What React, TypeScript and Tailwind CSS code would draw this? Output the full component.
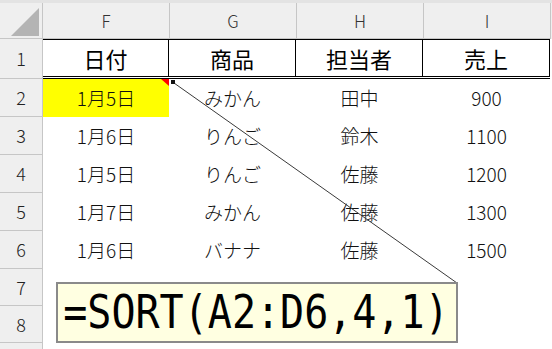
import React from 'react';

const cols = [
  { key: 'F', width: 'w-[127px]' },
  { key: 'G', width: 'w-[127px]' },
  { key: 'H', width: 'w-[127px]' },
  { key: 'I', width: 'w-[127px]' },
];

const headers = ['日付', '商品', '担当者', '売上'];

const rows = [
  ['1月5日', 'みかん', '田中', '900'],
  ['1月6日', 'りんご', '鈴木', '1100'],
  ['1月5日', 'りんご', '佐藤', '1200'],
  ['1月7日', 'みかん', '佐藤', '1300'],
  ['1月6日', 'バナナ', '佐藤', '1500'],
];

const font = { fontFamily: '"Noto Sans CJK JP", "Noto Sans", sans-serif' };

const RowHead = ({ n, h }: { n: string; h: string }) => (
  <div
    className={`w-[43px] ${h} shrink-0 bg-[#efefef] border-r border-b border-[#c6c6c6] flex items-center justify-center text-[18px] font-light text-[#222]`}
  >
    {n}
  </div>
);

const App = () => {
  return (
    <div className="relative w-[552px] h-[349px] overflow-hidden bg-white" style={font}>
      {/* Column headers */}
      <div className="flex h-[39px] border-t-[3px] border-[#e3e3e3] bg-[#efefef]">
        <div className="w-[43px] shrink-0 border-r border-b border-[#c6c6c6] relative">
          <div className="absolute left-[11px] top-[5px] w-[28px] h-[28px] bg-[#b4b4b4] [clip-path:polygon(100%_0,100%_100%,0_100%)]" />
        </div>
        {cols.map((c) => (
          <div
            key={c.key}
            className={`${c.width} shrink-0 border-r border-b border-[#c6c6c6] flex items-center justify-center text-[17px] font-light text-[#333]`}
          >
            {c.key}
          </div>
        ))}
      </div>

      {/* Row 1 - table header */}
      <div className="flex h-[40px]">
        <RowHead n="1" h="h-[40px]" />
        <div className="flex border-t border-black border-b-[3px] border-b-black [border-bottom-style:double]">
          {headers.map((t, i) => (
            <div
              key={t}
              className={`${i === 0 ? 'w-[126px]' : 'w-[127px]'} shrink-0 border-r border-black flex items-center justify-center text-[22px] text-black`}
            >
              {t}
            </div>
          ))}
        </div>
      </div>

      {/* Data rows */}
      {rows.map((r, ri) => (
        <div key={ri} className="flex h-[38px]">
          <RowHead n={String(ri + 2)} h="h-[38px]" />
          {r.map((v, ci) => (
            <div
              key={ci}
              className={`${ci === 0 ? 'w-[126px]' : 'w-[127px]'} shrink-0 flex items-center justify-center text-[19px] font-light text-[#111] ${
                ri === 0 && ci === 0 ? 'bg-[#ffff00] relative' : ''
              }`}
            >
              {v}
              {ri === 0 && ci === 0 && (
                <div className="absolute right-0 top-0 w-[8px] h-[7px] bg-[#ff0000] [clip-path:polygon(0_0,100%_0,100%_100%)]" />
              )}
            </div>
          ))}
        </div>
      ))}

      <div className="flex h-[37px]">
        <RowHead n="7" h="h-[37px]" />
      </div>
      <div className="flex h-[37px]">
        <RowHead n="8" h="h-[37px]" />
      </div>
      <div className="flex h-[10px]">
        <RowHead n="" h="h-[10px]" />
      </div>

      {/* Comment leader line */}
      <svg className="absolute left-0 top-0 pointer-events-none" width="552" height="349">
        <line x1="174" y1="83" x2="457" y2="283" stroke="#3a3a3a" strokeWidth="1" />
        <rect x="171" y="80" width="4" height="4" fill="#111" />
      </svg>

      {/* Comment box */}
      <div className="absolute left-[56px] top-[282px] w-[402px] h-[61px] bg-[#ffffe1] border-2 border-[#8a8a8a] overflow-hidden">
        <div
          className="pl-[6px] pt-[1px] text-[46px] leading-[54px] text-black origin-left scale-x-[0.87] whitespace-nowrap"
          style={{ fontFamily: '"DejaVu Sans Mono", "Liberation Mono", monospace' }}
        >
          =SORT(A2:D6,4,1)
        </div>
      </div>
    </div>
  );
};

export default App;
